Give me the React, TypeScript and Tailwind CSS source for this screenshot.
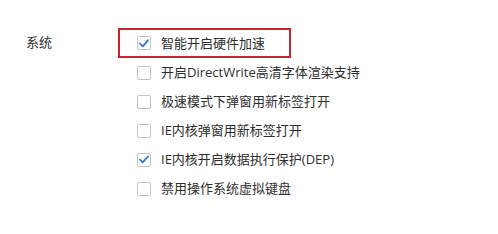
const items = [
  { label: '智能开启硬件加速', checked: true },
  { label: '开启DirectWrite高清字体渲染支持', checked: false },
  { label: '极速模式下弹窗用新标签打开', checked: false },
  { label: 'IE内核弹窗用新标签打开', checked: false },
  { label: 'IE内核开启数据执行保护(DEP)', checked: true },
  { label: '禁用操作系统虚拟键盘', checked: false },
];

function Box({ checked }: { checked: boolean }) {
  return (
    <span className="w-[14px] h-[14px] shrink-0 rounded-[2px] border border-[#c4c4c4] bg-white flex items-center justify-center">
      {checked && (
        <svg width="10" height="9" viewBox="0 0 10 9" fill="none">
          <path d="M1 4.6 L3.8 7.4 L9 1.3" stroke="#3a7bd5" strokeWidth="1.9" strokeLinecap="round" strokeLinejoin="round" />
        </svg>
      )}
    </span>
  );
}

export default function App() {
  return (
    <div
      className="w-[498px] h-[234px] bg-white flex pt-[28px] text-[13px] text-[#2e2e2e]"
      style={{ fontFamily: '"Open Sans", "Noto Sans CJK SC", sans-serif' }}
    >
      <div className="w-[118px] pl-[26px]">
        <div className="h-[30px] flex items-center">系统</div>
      </div>
      <div className="flex flex-col">
        {items.map((it, i) => (
          <div
            key={it.label}
            className={
              i === 0
                ? 'h-[30px] w-[173px] border-2 border-[#c8232e] pl-[17px] flex items-center gap-[10px]'
                : 'h-[29px] pl-[19px] flex items-center gap-[10px]'
            }
          >
            <Box checked={it.checked} />
            <span className="whitespace-nowrap leading-none">{it.label}</span>
          </div>
        ))}
      </div>
    </div>
  );
}
